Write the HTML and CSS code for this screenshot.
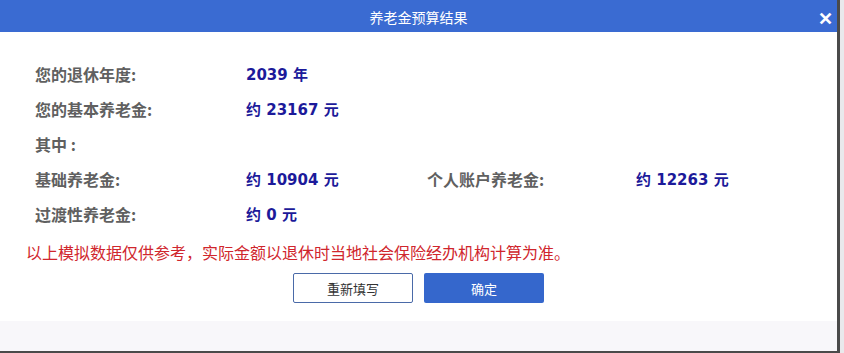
FILE: index.html
```html
<!DOCTYPE html>
<html lang="zh-CN">
<head>
    <meta charset="UTF-8">
    <meta name="viewport" content="width=device-width, initial-scale=1.0">
    <title>养老金预算结果</title>
    <link rel="stylesheet" href="styles.css">
</head>
<body>
    <div class="dialog">
        <div class="dialog-header">
            <span class="dialog-title">养老金预算结果</span>
            <span class="dialog-close">&#10005;</span>
        </div>
        <div class="dialog-body">
            <div class="result-grid">
                <div class="label">您的退休年度:</div>
                <div class="value">2039 年</div>
                <div></div><div></div>

                <div class="label">您的基本养老金:</div>
                <div class="value">约 23167 元</div>
                <div></div><div></div>

                <div class="label">其中 :</div>
                <div></div><div></div><div></div>

                <div class="label">基础养老金:</div>
                <div class="value">约 10904 元</div>
                <div class="label">个人账户养老金:</div>
                <div class="value">约 12263 元</div>

                <div class="label">过渡性养老金:</div>
                <div class="value">约 0 元</div>
                <div></div><div></div>
            </div>
            <p class="note">以上模拟数据仅供参考，实际金额以退休时当地社会保险经办机构计算为准。</p>
            <div class="actions">
                <button class="btn btn-reset">重新填写</button>
                <button class="btn btn-ok">确定</button>
            </div>
        </div>
        <div class="dialog-footer"></div>
    </div>
</body>
</html>
```

FILE: styles.css
```css
body {
    margin: 0;
    padding: 0;
    background-color: #e9e9ec;
    font-family: "Noto Sans CJK SC", "Noto Sans", sans-serif;
}
.dialog {
    width: 837px;
    background: white;
    border-right: 3px solid #4a4a4a;
    border-bottom: 2px solid #4a4a4a;
}
.dialog-header {
    position: relative;
    height: 32px;
    background-color: #3a6bd2;
    color: white;
    text-align: center;
    line-height: 32px;
}
.dialog-title {
    font-size: 14px;
}
.dialog-close {
    position: absolute;
    right: 4px;
    top: 1px;
    font-size: 18px;
    font-weight: bold;
}
.dialog-body {
    padding: 24px 0 18px 0;
}
.result-grid {
    display: grid;
    grid-template-columns: 211px 181px 209px 1fr;
    grid-auto-rows: 35px;
    align-items: center;
    padding-left: 35px;
}
.label {
    font-size: 16px;
    font-weight: bold;
    color: #606060;
}
.value {
    font-family: "DejaVu Sans", "Noto Sans CJK SC", sans-serif;
    font-size: 15px;
    font-weight: bold;
    color: #1c1a9a;
}
.note {
    margin: 11px 0 0 26px;
    line-height: 20px;
    font-size: 16px;
    color: #d0262d;
}
.actions {
    display: flex;
    gap: 11px;
    padding-left: 293px;
    margin-top: 11px;
}
.btn {
    width: 120px;
    height: 30px;
    font-family: "Noto Sans CJK SC", sans-serif;
    font-size: 13px;
    border-radius: 2px;
    cursor: pointer;
}
.btn-reset {
    background: white;
    color: #333;
    border: 1px solid #4a6aa8;
}
.btn-ok {
    background-color: #3567cc;
    color: white;
    border: none;
}
.dialog-footer {
    height: 30px;
    background-color: #f8f7fa;
}
```
